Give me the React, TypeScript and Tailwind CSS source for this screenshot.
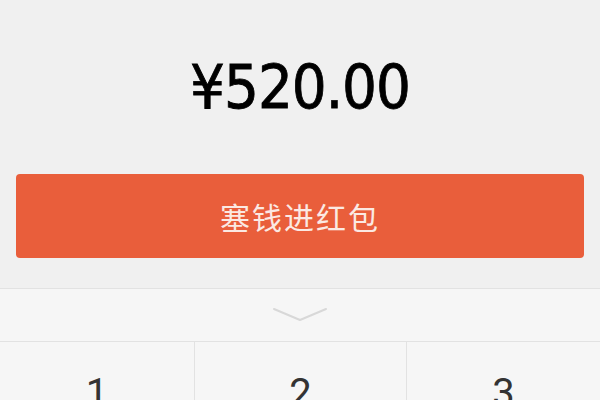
export default function App() {
  return (
    <div className="w-[600px] h-[400px] overflow-hidden bg-[#f0f0f0] flex flex-col" style={{ fontFamily: "Roboto, 'Noto Sans CJK SC', sans-serif" }}>
      {/* Amount */}
      <div className="h-[174px] shrink-0 flex items-center justify-center pb-[2px]">
        <span className="text-[61px] leading-none text-black tracking-[-1px] [-webkit-text-stroke:0.8px_black] [font-family:'DejaVu_Sans_Condensed',Roboto,sans-serif]">¥520.00</span>
      </div>

      {/* Button */}
      <div className="px-4 shrink-0">
        <button className="w-full h-[84px] rounded-[4px] bg-[#e95e3b] text-[#fbe9e3] text-[30px] tracking-[2px] [font-family:'Noto_Sans_CJK_SC',sans-serif]">
          塞钱进红包
        </button>
      </div>

      <div className="h-[30px] shrink-0" />

      {/* Keyboard */}
      <div className="flex-1 min-h-0 overflow-hidden bg-[#f6f6f6] border-t border-[#e2e2e2] flex flex-col">
        <div className="h-[53px] shrink-0 flex items-center justify-center border-b border-[#e2e2e2]">
          <svg width="54" height="16" viewBox="0 0 54 16" fill="none">
            <path d="M1 2 L27 13 L53 2" stroke="#d8d8d8" strokeWidth="2" strokeLinecap="round" strokeLinejoin="round" />
          </svg>
        </div>
        <div className="h-[90px] shrink-0 grid grid-cols-[195px_212px_1fr]">
          {["1", "2", "3"].map((n, i) => (
            <div key={n} className={`flex justify-center pt-[32px] text-[40px] leading-none text-[#333] ${i < 2 ? "border-r border-[#e2e2e2]" : ""}`}>
              {n}
            </div>
          ))}
        </div>
      </div>
    </div>
  );
}
